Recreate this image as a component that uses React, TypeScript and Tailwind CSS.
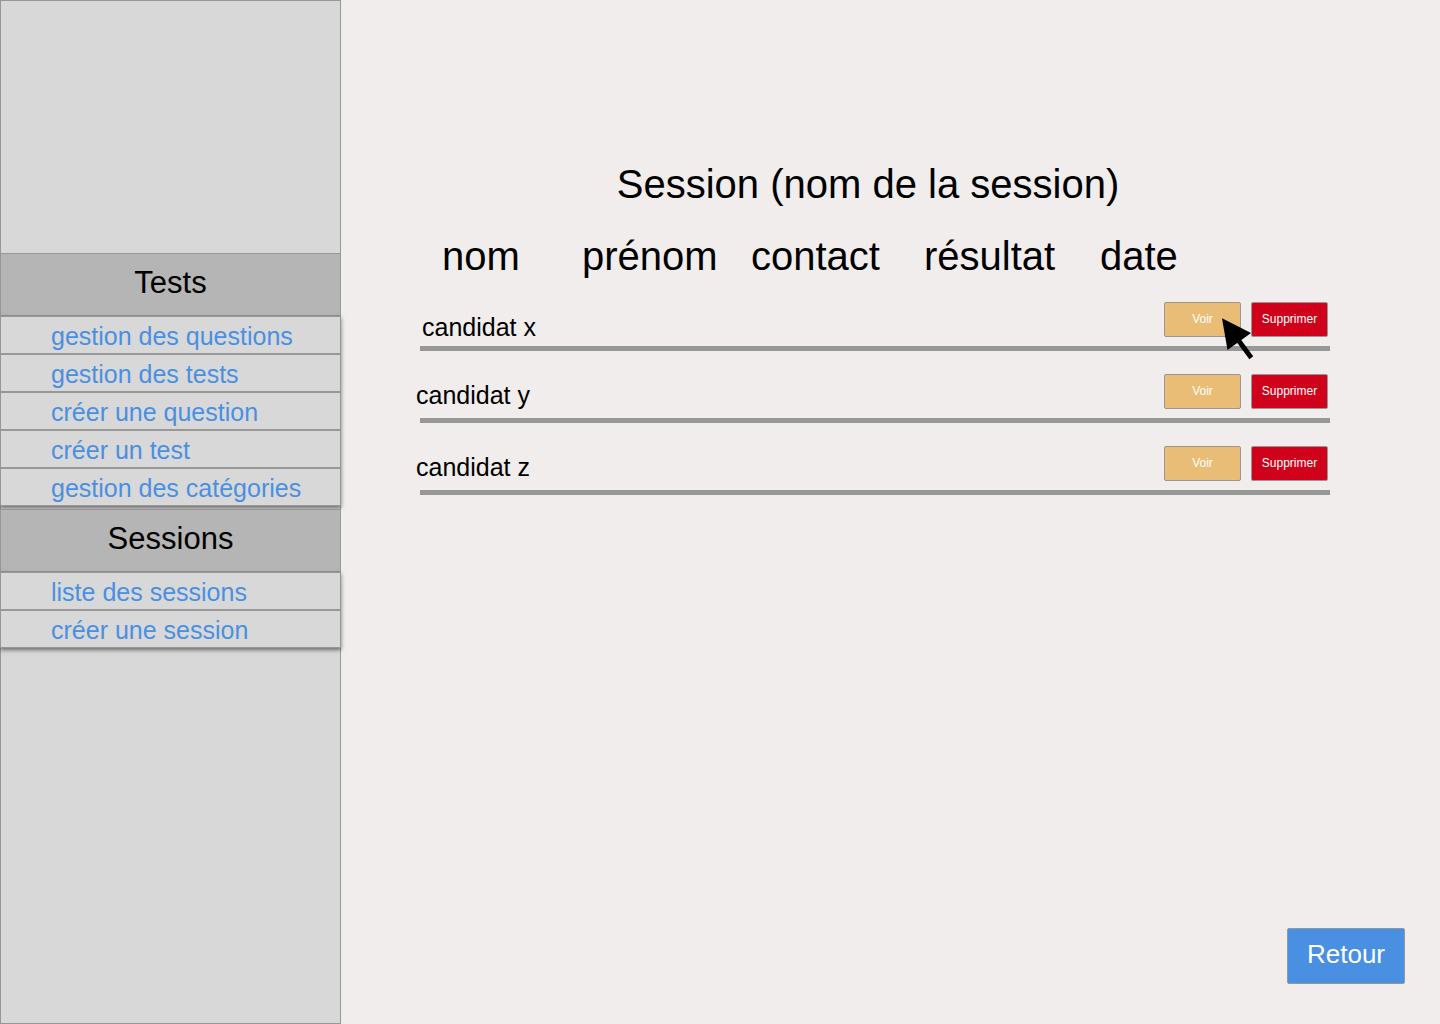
type MenuSection = { title: string; links: string[] };

const sections: MenuSection[] = [
  {
    title: "Tests",
    links: [
      "gestion des questions",
      "gestion des tests",
      "créer une question",
      "créer un test",
      "gestion des catégories",
    ],
  },
  { title: "Sessions", links: ["liste des sessions", "créer une session"] },
];

const candidates = ["candidat x", "candidat y", "candidat z"];

function Pointer() {
  return (
    <svg
      className="pointer-events-none absolute top-4 left-[57px] z-10 h-[42px] w-[34px]"
      viewBox="0 0 34 42"
      aria-hidden="true"
    >
      <path d="M1 0.2 L30 15 L6.5 32 Z" fill="#000" />
      <path d="M15 19 L30.3 39.7" stroke="#000" strokeWidth="4.8" />
    </svg>
  );
}

function Section({ title, links }: MenuSection) {
  return (
    <section className="mb-[3px]">
      <h2 className="-mx-px border border-[#979797] bg-[#b5b5b5] pb-1 text-center text-[31px] leading-[57px]">
        {title}
      </h2>
      <ul className="-mx-px shadow-[0_2px_4px_rgba(0,0,0,0.5)]">
        {links.map((link) => (
          <li key={link}>
            <a
              href="#"
              className="block border border-[#979797] bg-[#d8d8d8] pt-0.5 pl-[50px] text-[25px] leading-[34px] text-[#4a90e2]"
            >
              {link}
            </a>
          </li>
        ))}
      </ul>
    </section>
  );
}

function CandidateRow({ name, hovered }: { name: string; hovered: boolean }) {
  return (
    <tr className="group h-[72px] *:border-b-[5px] *:border-[#979797]">
      <th
        scope="row"
        colSpan={2}
        className="pt-7 text-left align-top text-[25px] leading-8 font-normal group-first:pt-8"
      >
        <span className="-ml-1 group-first:ml-0.5">{name}</span>
      </th>
      <td />
      <td />
      <td />
      <td className="pt-[23px] pr-0.5 align-top">
        <div className="flex justify-end gap-2.5">
          <div className="relative">
            <button
              type="button"
              className="block h-[35px] w-[77px] rounded-xs border border-[#979797] bg-[#e9bd75] pb-0.5 text-xs text-white"
            >
              Voir
            </button>
            {hovered && <Pointer />}
          </div>
          <button
            type="button"
            className="block h-[35px] w-[77px] rounded-xs border border-[#979797] bg-[#d0021b] pb-0.5 text-xs text-white"
          >
            Supprimer
          </button>
        </div>
      </td>
    </tr>
  );
}

export default function App() {
  return (
    <div className="flex min-h-screen bg-[#f0edec] font-['Liberation_Sans',Arial,sans-serif] text-black">
      <nav className="w-[341px] shrink-0 border border-[#979797] bg-[#d8d8d8] pt-[252px]">
        {sections.map((section) => (
          <Section key={section.title} {...section} />
        ))}
      </nav>

      <main className="flex grow flex-col pt-40">
        <div className="mr-[110px] ml-[79px]">
          <h1 className="pr-3.5 text-center text-[40px] leading-[48px]">
            Session (nom de la session)
          </h1>
          <table className="mt-[25px] w-full table-fixed border-separate border-spacing-0">
            <colgroup>
              <col className="w-[140px]" />
              <col className="w-[169px]" />
              <col className="w-[173px]" />
              <col className="w-[176px]" />
              <col className="w-20" />
              <col />
            </colgroup>
            <thead>
              <tr className="text-left text-[40px] leading-[46px] *:pl-[22px] *:font-normal">
                <th scope="col">nom</th>
                <th scope="col">prénom</th>
                <th scope="col">contact</th>
                <th scope="col">résultat</th>
                <th scope="col" colSpan={2}>date</th>
              </tr>
            </thead>
            <tbody>
              {candidates.map((name, index) => (
                <CandidateRow key={name} name={name} hovered={index === 0} />
              ))}
            </tbody>
          </table>
        </div>

        <div className="mt-auto flex justify-end pr-[35px] pb-10">
          <button
            type="button"
            className="h-14 w-[118px] rounded-xs border border-[#979797] bg-[#4a90e2] pb-1 text-[26px] text-white"
          >
            Retour
          </button>
        </div>
      </main>
    </div>
  );
}
